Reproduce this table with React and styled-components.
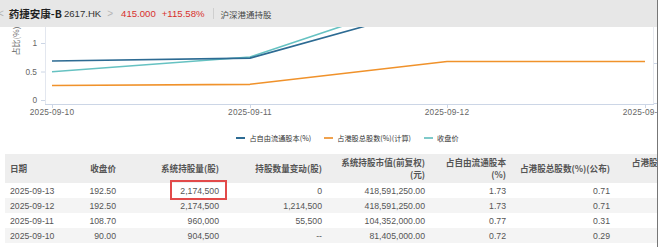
import React from 'react'
import styled, { createGlobalStyle } from 'styled-components'

const Global = createGlobalStyle`
  html, body { margin: 0; padding: 0; background: #fff; }
  body { font-family: "Liberation Sans", "Noto Sans CJK SC", Arial, sans-serif; }
`

const Page = styled.div`
  width: 657px;
  height: 247px;
  border-right: 1px solid #777;
  overflow: hidden;
  background: #fff;
`

/* barra do topo */
const TopBar = styled.div`
  height: 27px;
  background: #e7e7e7;
  display: flex;
  align-items: center;
  white-space: nowrap;
`
const Chevron = styled.span`
  color: #b5b5b5;
  font-size: 10px;
  margin: ${(p) => p.$m};
`
const Name = styled.span`
  font-family: "Noto Sans CJK SC", sans-serif;
  font-weight: 700;
  font-size: 10.5px;
  color: #1f1f1f;
  margin-left: 5px;
`
const Code = styled.span`
  font-size: 9.6px;
  color: #333;
  margin-left: 2px;
`
const Quote = styled.span`
  font-size: 9.6px;
  color: #d8302c;
  margin-left: ${(p) => p.$ml}px;
`
const Divider = styled.span`
  width: 1px;
  height: 11px;
  background: #cfcfcf;
  margin: 0 7px 0 8px;
`
const Tag = styled.span`
  font-family: "Noto Sans CJK SC", sans-serif;
  font-size: 8.5px;
  color: #444;
`

/* grafico */
const ChartBox = styled.div`
  height: 95px;
  svg { display: block; }
`
const Legend = styled.div`
  height: 31px;
  display: flex;
  justify-content: center;
  align-items: center;
  gap: 13px;
  padding-left: 38px;
  box-sizing: border-box;
`
const LegendItem = styled.div`
  display: flex;
  align-items: center;
  gap: 4px;
  font-family: "Noto Sans CJK SC", sans-serif;
  font-size: 7.2px;
  color: #333;
  &::before {
    content: '';
    width: 9px;
    height: 2px;
    background: ${(p) => p.$color};
  }
`

/* tabela */
const Table = styled.table`
  margin-top: 1px;
  margin-left: 5px;
  width: 711px;
  table-layout: fixed;
  border-collapse: collapse;
`
const Th = styled.th`
  height: 29px;
  padding: 0 6px 0 5px;
  background: #eeeeee;
  font-family: "Noto Sans CJK SC", sans-serif;
  font-weight: 600;
  font-size: 8.6px;
  line-height: 11.5px;
  color: #555;
  text-align: ${(p) => p.$align || 'right'};
  white-space: pre-line;
`
const Row = styled.tr`
  background: ${(p) => (p.$odd ? '#f4f4f4' : '#fff')};
`
const Td = styled.td`
  position: relative;
  height: 15px;
  padding: 0 6px 0 5px;
  font-size: 8.7px;
  color: #555;
  text-align: ${(p) => p.$align || 'right'};
  white-space: nowrap;
`
const Mark = styled.span`
  position: absolute;
  left: 48px;
  right: -2px;
  top: -3px;
  bottom: -2px;
  border: 2px solid #e24a4a;
  pointer-events: none;
`

const xs = [52, 250, 447, 645]
const dates = ['2025-09-10', '2025-09-11', '2025-09-12', '2025-09-13']
const yPct = (v) => 75 - 57 * v
const yPrice = (p) => 44.7 - (p - 90) * 0.786

const series = [
  { color: '#f0922b', pts: [0.29, 0.31, 0.71, 0.71].map(yPct) },
  { color: '#66c2c2', pts: [90, 108.7, 192.5, 192.5].map(yPrice) },
  { color: '#2d6b93', pts: [0.72, 0.77, 1.73, 1.73].map(yPct) },
]

const Chart = () => (
  <ChartBox>
    <svg width="657" height="95" viewBox="0 0 657 95">
      <text x="17" y="14" transform="rotate(-90 17 14)" textAnchor="middle" fontSize="8" fill="#666"
        fontFamily="Noto Sans CJK SC, sans-serif" dominantBaseline="middle">占比(%)</text>
      <line x1="45.5" y1="0" x2="45.5" y2="77" stroke="#e3e7ef" />
      <line x1="653.5" y1="0" x2="653.5" y2="77" stroke="#e6e9ef" />
      <line x1="45" y1="77.5" x2="654" y2="77.5" stroke="#ccd6e6" />
      {[[1, '1'], [0.5, '0.5'], [0, '0']].map(([v, t]) => (
        <g key={t}>
          <line x1="41" x2="45" y1={yPct(v) - 1.5} y2={yPct(v) - 1.5} stroke="#ccd6e6" />
          <text x="37" y={yPct(v) - 1} textAnchor="end" fontSize="8.3" fill="#666" dominantBaseline="middle"
            fontFamily="Liberation Sans, sans-serif">{t}</text>
        </g>
      ))}
      <line x1="654" x2="657" y1="36.5" y2="36.5" stroke="#ccd6e6" />
      <line x1="654" x2="657" y1="76.5" y2="76.5" stroke="#ccd6e6" />
      {xs.map((x, i) => (
        <g key={x}>
          <line x1={x + 0.5} x2={x + 0.5} y1="77" y2="81" stroke="#ccd6e6" />
          <text x={x} y="88" textAnchor="middle" fontSize="8.3" fill="#666" letterSpacing="0.2"
            fontFamily="Liberation Sans, sans-serif">{dates[i]}</text>
        </g>
      ))}
      {series.map((s) => (
        <polyline key={s.color} fill="none" stroke={s.color} strokeWidth="1.6" strokeLinejoin="round"
          points={s.pts.map((y, i) => `${xs[i]},${y}`).join(' ')} />
      ))}
    </svg>
  </ChartBox>
)

const cols = [60, 57, 103, 103, 103, 81, 104, 100]
const heads = [
  '日期', '收盘价', '系统持股量(股)', '持股数量变动(股)', '系统持股市值(前复权)\n(元)',
  '占自由流通股本\n(%)', '占港股总股数(%)(公布)', '占港股总股数(%)(计算)',
]
const rows = [
  ['2025-09-13', '192.50', '2,174,500', '0', '418,591,250.00', '1.73', '0.71', '0.71'],
  ['2025-09-12', '192.50', '2,174,500', '1,214,500', '418,591,250.00', '1.73', '0.71', '0.71'],
  ['2025-09-11', '108.70', '960,000', '55,500', '104,352,000.00', '0.77', '0.31', '0.31'],
  ['2025-09-10', '90.00', '904,500', '--', '81,405,000.00', '0.72', '0.29', '0.29'],
]

export default function App() {
  return (
    <Page>
      <Global />
      <TopBar>
        <Chevron $m="0 0 0 -2px">&lt;</Chevron>
        <Name>药捷安康-B</Name>
        <Code>2617.HK</Code>
        <Chevron $m="0 0 0 6px">&gt;</Chevron>
        <Quote $ml={8}>415.000</Quote>
        <Quote $ml={6}>+115.58%</Quote>
        <Divider />
        <Tag>沪深港通持股</Tag>
      </TopBar>
      <Chart />
      <Legend>
        <LegendItem $color="#2d6b93">占自由流通股本(%)</LegendItem>
        <LegendItem $color="#f0a24e">占港股总股数(%)(计算)</LegendItem>
        <LegendItem $color="#7fcaca">收盘价</LegendItem>
      </Legend>
      <Table>
        <colgroup>
          {cols.map((w, i) => <col key={i} style={{ width: w }} />)}
        </colgroup>
        <thead>
          <tr>
            {heads.map((h, i) => <Th key={h} $align={i === 0 ? 'left' : 'right'}>{h}</Th>)}
          </tr>
        </thead>
        <tbody>
          {rows.map((r, ri) => (
            <Row key={r[0]} $odd={ri % 2 === 1}>
              {r.map((c, ci) => (
                <Td key={ci} $align={ci === 0 ? 'left' : 'right'}>
                  {c}
                  {ri === 0 && ci === 2 && <Mark />}
                </Td>
              ))}
            </Row>
          ))}
        </tbody>
      </Table>
    </Page>
  )
}
